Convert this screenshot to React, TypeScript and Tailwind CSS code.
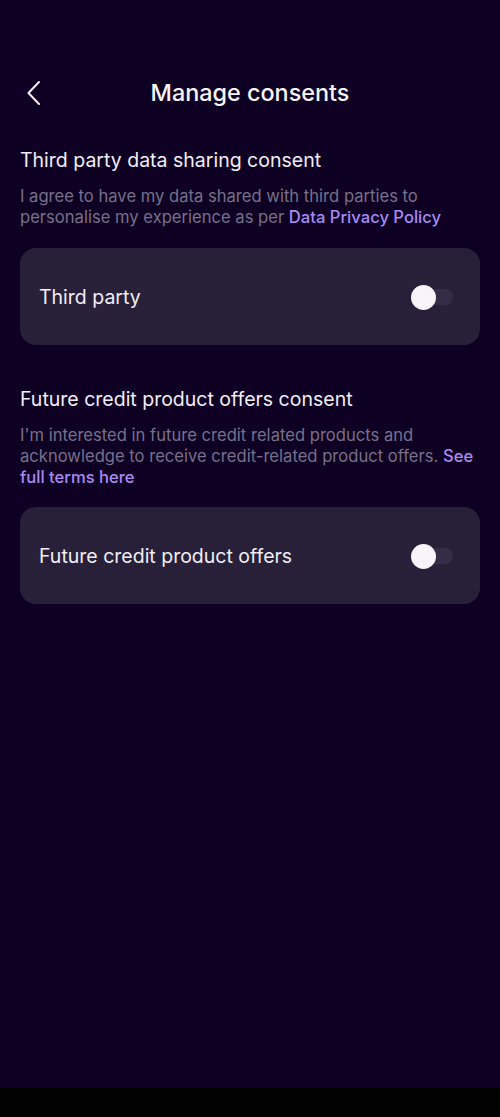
import React from "react";

function Toggle() {
  return (
    <div className="relative w-[41px] h-[16px] rounded-full bg-[#352d45] mt-[1px]">
      <div className="absolute left-[-1px] top-[-4.5px] w-[25px] h-[25px] rounded-full bg-[#f7f5f9]" />
    </div>
  );
}

function Card({ label }: { label: string }) {
  return (
    <div className="mx-[20px] h-[97px] rounded-[16px] bg-[#282038] flex items-center justify-between pl-[19px] pr-[27px]">
      <span className="text-[19.5px] text-[#f1eef4] pt-[3px]">{label}</span>
      <Toggle />
    </div>
  );
}

export default function App() {
  return (
    <div
      className="w-[500px] h-[1117px] bg-black flex flex-col"
      style={{ fontFamily: "Inter, 'Noto Sans', sans-serif" }}
    >
      <div className="h-[1088px] bg-[#0e0022] flex flex-col">
        <div className="relative mt-[65px] h-[56px] flex items-center justify-center">
          <svg
            className="absolute left-[24px] top-[16px]"
            width="20"
            height="24"
            viewBox="0 0 20 24"
            fill="none"
          >
            <path d="M15 1 L4.5 12 L15 23" stroke="#f1eef4" strokeWidth="2" strokeLinecap="round" strokeLinejoin="round" />
          </svg>
          <h1 className="text-[23.4px] font-medium text-[#f7f5f9] leading-[30px]">Manage consents</h1>
        </div>
        <div className="px-[20px] mt-[25px]">
          <h2 className="text-[19.5px] text-[#f1eef4] leading-[28px]">Third party data sharing consent</h2>
          <p className="mt-[11.5px] text-[16.6px] leading-[21px] text-[#77708a]">
            I agree to have my data shared with third parties to personalise my experience as per{" "}
            <span className="text-[#a98bf2] font-medium">Data Privacy Policy</span>
          </p>
        </div>
        <div className="mt-[20.5px]">
          <Card label="Third party" />
        </div>
        <div className="px-[20px] mt-[39.5px]">
          <h2 className="text-[19.5px] text-[#f1eef4] leading-[28px]">Future credit product offers consent</h2>
          <p className="mt-[12.5px] text-[16.6px] leading-[21px] text-[#77708a]">
            I'm interested in future credit related products and acknowledge to receive credit-related product offers.{" "}
            <span className="text-[#a98bf2] font-medium">See full terms here</span>
          </p>
        </div>
        <div className="mt-[19px]">
          <Card label="Future credit product offers" />
        </div>
      </div>
    </div>
  );
}
